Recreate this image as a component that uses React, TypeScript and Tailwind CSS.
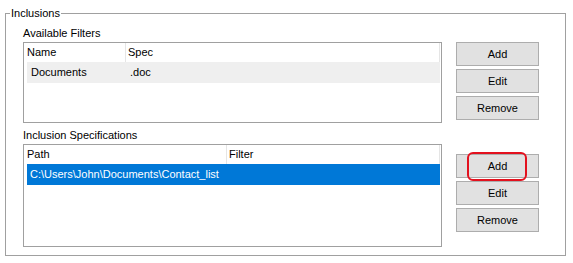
import type { ReactNode } from "react";

const font = { fontFamily: '"Liberation Sans", "Noto Sans", sans-serif' };

function ActionButton({ label, marked }: { label: string; marked?: boolean }) {
  return (
    <div className="relative">
      <button className="flex h-[24px] w-[83px] items-center justify-center border border-[#adadad] bg-[#e1e1e1] text-[11px] leading-none text-black">
        {label}
      </button>
      {marked ? (
        <span className="pointer-events-none absolute left-[11px] top-[-2px] h-[29px] w-[60px] rounded-[6px] border-2 border-[#e3111e]" />
      ) : null}
    </div>
  );
}

function ButtonStack({ marked }: { marked?: boolean }) {
  return (
    <div className="ml-[14px] flex flex-col gap-[3px]">
      <ActionButton label="Add" marked={marked} />
      <ActionButton label="Edit" />
      <ActionButton label="Remove" />
    </div>
  );
}

function ListBox({
  height,
  firstCol,
  cols,
  children,
}: {
  height: string;
  firstCol: string;
  cols: [string, string];
  children: ReactNode;
}) {
  return (
    <div className={`w-[419px] ${height} border border-[#a0a0a0] bg-white pl-[3px] pr-[1px]`}>
      <div className="flex h-[19px] items-center text-[11px] text-black">
        <div className={`${firstCol} h-full border-r border-[#e5e5e5] leading-[19px]`}>{cols[0]}</div>
        <div className="h-full flex-1 border-r border-[#e5e5e5] pl-[2px] leading-[19px]">{cols[1]}</div>
      </div>
      {children}
    </div>
  );
}

export default function App() {
  return (
    <div className="h-[263px] w-[573px] bg-white pl-[5px] pt-[5px]" style={font}>
      <fieldset className="h-[251px] w-[561px] border border-[#a0a0a0]">
        <legend className="ml-[4px] px-px text-[11px] leading-[16px] text-black">Inclusions</legend>
        <div className="pl-[17px] pt-[4px]">
          <div className="h-[17px] text-[11px] leading-[17px] text-black">Available Filters</div>
          <div className="flex">
            <ListBox height="h-[81px]" firstCol="w-[99px]" cols={["Name", "Spec"]}>
              <div className="flex h-[21px] items-center bg-[#efefef] text-[11px] text-black">
                <div className="w-[99px] pl-[4px]">Documents</div>
                <div className="pl-[4px]">.doc</div>
              </div>
            </ListBox>
            <ButtonStack />
          </div>
          <div className="mt-[4px] h-[17px] text-[11px] leading-[17px] text-black">Inclusion Specifications</div>
          <div className="flex">
            <ListBox height="h-[103px]" firstCol="w-[200px]" cols={["Path", "Filter"]}>
              <div className="flex h-[21px] items-center bg-[#0078d7] text-[11px] text-white">
                <div className="pl-[3px]">C:\Users\John\Documents\Contact_list</div>
              </div>
            </ListBox>
            <div className="pt-[10px]">
              <ButtonStack marked />
            </div>
          </div>
        </div>
      </fieldset>
    </div>
  );
}
